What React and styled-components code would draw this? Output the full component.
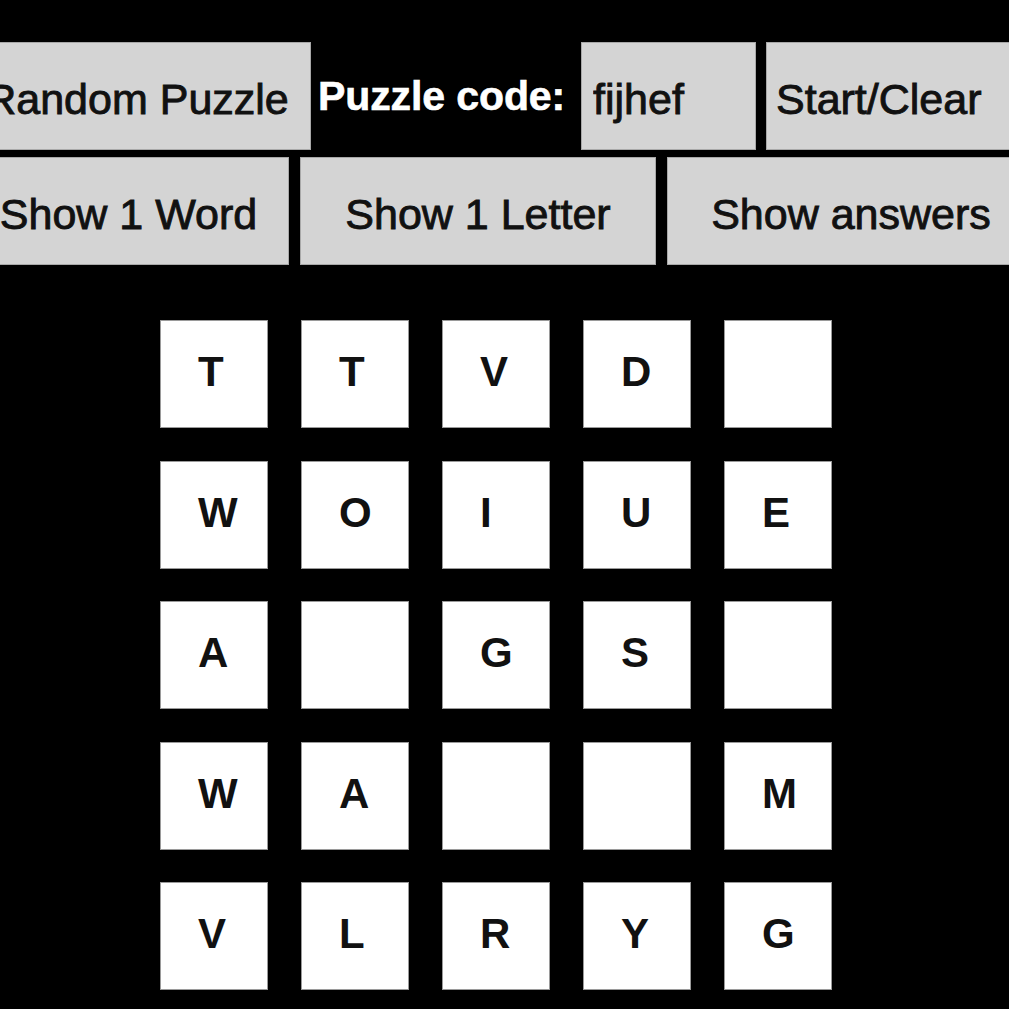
import React from 'react';
import styled, { createGlobalStyle } from 'styled-components';

const GlobalStyle = createGlobalStyle`
  html, body {
    margin: 0;
    padding: 0;
    background: #000;
    overflow: hidden;
  }
  body {
    font-family: "Liberation Sans", Arial, Helvetica, sans-serif;
  }
`;

const board = [
  ['T', 'T', 'V', 'D', ''],
  ['W', 'O', 'I', 'U', 'E'],
  ['A', '', 'G', 'S', ''],
  ['W', 'A', '', '', 'M'],
  ['V', 'L', 'R', 'Y', 'G'],
];

const App = () => {
  return (
    <Page>
      <GlobalStyle />
      <Controls>
        <Row>
          <Button width={348}>Random Puzzle</Button>
          <Label>Puzzle code:</Label>
          <CodeInput defaultValue="fijhef" />
          <Button width={290} align="left">Start/Clear</Button>
        </Row>
        <Row second>
          <Button width={321}>Show 1 Word</Button>
          <Button width={356}>Show 1 Letter</Button>
          <Button width={368}>Show answers</Button>
        </Row>
      </Controls>
      <Board>
        {board.flat().map((letter, i) => (
          <Cell key={i}>{letter}</Cell>
        ))}
      </Board>
    </Page>
  );
};

// Styled components
const Page = styled.div`
  width: 1009px;
  height: 1009px;
  background: #000;
  padding-top: 42px;
  box-sizing: border-box;
  overflow: hidden;
`;

const Controls = styled.div`
  display: flex;
  flex-direction: column;
  gap: 7px;
`;

const Row = styled.div`
  display: flex;
  align-items: stretch;
  height: 108px;
  margin-left: ${(p) => (p.second ? '-32px' : '-37px')};
  gap: ${(p) => (p.second ? '11px' : '7px')};
  & > * {
    flex-shrink: 0;
  }
`;

const Button = styled.button`
  flex: 0 0 ${(p) => p.width}px;
  box-sizing: border-box;
  background: #d4d4d4;
  border: 1px solid #a8a8a8;
  margin: 0;
  padding: 6px 0 0 ${(p) => (p.align === 'left' ? '9px' : '0')};
  text-align: ${(p) => p.align || 'center'};
  white-space: nowrap;
  font-family: "Liberation Sans", Arial, Helvetica, sans-serif;
  font-size: 43px;
  color: #111;
  -webkit-text-stroke: 0.9px #111;
`;

const Label = styled.div`
  display: flex;
  align-items: center;
  width: 250px;
  white-space: nowrap;
  color: #fff;
  font-weight: bold;
  font-size: 41px;
  letter-spacing: -0.1px;
  margin-right: 6px;
  -webkit-text-stroke: 0.6px #fff;
`;

const CodeInput = styled.input`
  width: 175px;
  box-sizing: border-box;
  background: #d4d4d4;
  border: 1px solid #a8a8a8;
  margin: 0 3px 0 0;
  padding: 6px 0 0 11px;
  font-family: "Liberation Sans", Arial, Helvetica, sans-serif;
  font-size: 43px;
  color: #111;
  -webkit-text-stroke: 0.9px #111;
  outline: none;
`;

const Board = styled.div`
  display: grid;
  grid-template-columns: repeat(5, 108px);
  grid-auto-rows: 108px;
  column-gap: 33px;
  row-gap: 32.5px;
  margin: 55px 0 0 160px;
`;

const Cell = styled.div`
  box-sizing: border-box;
  background: #fff;
  border: 1px solid #9a9a9a;
  display: flex;
  align-items: center;
  padding: 0 0 4px 37px;
  font-size: 42px;
  font-weight: bold;
  color: #111;
`;

export default App;
